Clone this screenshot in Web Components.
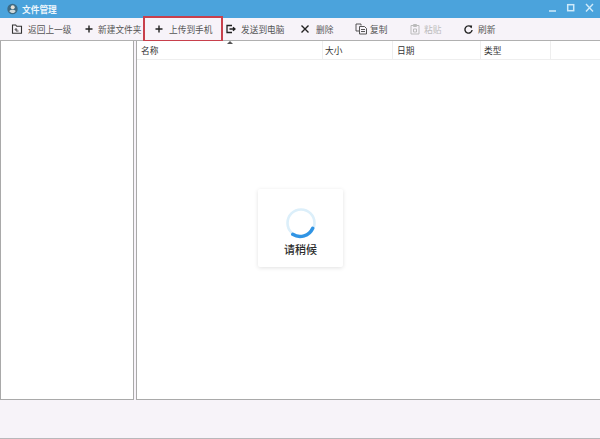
<!DOCTYPE html>
<html><head><meta charset="utf-8">
<style>
html,body{margin:0;padding:0;height:100%;background:#f7f3f9}
body{font-family:"Liberation Sans","Noto Sans CJK SC",sans-serif}
</style></head><body>
<fm-window>
  <tool-btn style="width:75px" label="返回上一级" ml="11" mr="5"><svg viewBox="0 0 12 12" width="12" height="12"><path d="M1.500 2h3.200l1 1.300h4.800v7h-9z" fill="none" stroke="#333" stroke-width="1.100"/><path d="M7.500 8H5V5.800M3.900 6.800L5 5.500l1.100 1.300" fill="none" stroke="#333" stroke-width=".9"/></svg></tool-btn>
  <tool-btn style="width:68px" label="新建文件夹" ml="9" mr="4"><svg viewBox="0 0 10 10" width="10" height="10"><path d="M5 1.500v7M1.500 5h7" stroke="#222" stroke-width="1.400"/></svg></tool-btn>
  <tool-btn style="width:80px" label="上传到手机" ml="11" mr="5" sel><svg viewBox="0 0 10 10" width="10" height="10"><path d="M5 1.500v7M1.500 5h7" stroke="#222" stroke-width="1.400"/></svg></tool-btn>
  <tool-btn style="width:76px" label="发送到电脑" ml="2" mr="4"><svg viewBox="0 0 12 12" width="12" height="12"><path d="M7 2.500H2v7h5" fill="none" stroke="#222" stroke-width="1.300"/><path d="M4.500 6h5M8 4.200L10 6 8 7.800" fill="none" stroke="#222" stroke-width="1.300"/></svg></tool-btn>
  <tool-btn style="width:54px" label="删除" ml="1" mr="6"><svg viewBox="0 0 10 10" width="10" height="10"><path d="M1.500 1.500l7 7M8.500 1.500l-7 7" stroke="#222" stroke-width="1.400"/></svg></tool-btn>
  <tool-btn style="width:54px" label="复制" ml="2" mr="1"><svg viewBox="0 0 14 12" width="14" height="12"><path d="M1 1h5v1.500M1 1v7h3M4.500 3.500h5l2 2v5.500h-7z M6 6.500h4M6 8.500h4" fill="none" stroke="#444" stroke-width="0.900"/></svg></tool-btn>
  <tool-btn style="width:54px" label="粘贴" ml="2" mr="3" dis><svg viewBox="0 0 12 12" width="12" height="12"><path d="M2 2.500h8V11H2zM4.500 1.500h3v2h-3zM4.500 6h3v3h-3z" fill="none" stroke="#bbb" stroke-width="1"/></svg></tool-btn>
  <tool-btn style="width:50px" label="刷新" ml="2" mr="4"><svg viewBox="0 0 11 11" width="11" height="11"><path d="M8.300 3.200A3.600 3.600 0 1 0 9.100 6" fill="none" stroke="#222" stroke-width="1.400"/><path d="M6.200 1.500l2.900.1-.3 2.900z" fill="#222"/></svg></tool-btn>
</fm-window>
<script>
function def(name,html){customElements.define(name,class extends HTMLElement{connectedCallback(){if(this.shadowRoot)return;const r=this.attachShadow({mode:'open'});r.innerHTML=typeof html==='function'?html(this):html;}});}
def('tool-btn',el=>`<style>
:host{display:flex;align-items:center;box-sizing:border-box;height:22px;flex:none;white-space:nowrap;position:relative}
.i{display:flex;align-items:center;justify-content:center;margin-left:${el.getAttribute('ml')}px;margin-right:${el.getAttribute('mr')}px}
.l{font-size:8.700px;color:${el.hasAttribute('dis')?'#bcbcbc':'#555'}}
.sel{position:absolute;left:0;right:0;top:-2px;bottom:-2px;border:2px solid #c8404c;box-sizing:border-box;pointer-events:none}
</style><span class="i"><slot></slot></span><span class="l">${el.getAttribute('label')}</span>${el.hasAttribute('sel')?'<span class="sel"></span>':''}`);
def('title-bar',`<style>
:host{display:flex;align-items:center;height:18px;background:#4ba3dc;color:#fff;font-size:8.700px;font-weight:700;flex:none}
.logo{margin:0 4px 0 7px;flex:none}
.t{flex:1;opacity:.9}
.c{display:flex;align-items:center;margin-right:2px}
.c svg{display:block;width:18px;height:16px}
</style>
<svg class="logo" width="11" height="12" viewBox="0 0 11 12"><circle cx="5.500" cy="6" r="5.200" fill="#3d6a83"/><circle cx="5.700" cy="4.200" r="2" fill="#e7e1d6"/><path d="M2.300 8.200c1-1.800 5-2 6.400-.2-1 2.500-4.500 2.800-6.400.2z" fill="#cfd8d9"/></svg>
<span class="t">文件管理</span>
<span class="c">
<svg viewBox="0 0 18 16"><path d="M5 10h7" stroke="#cfeafa" stroke-width="1.500"/></svg>
<svg viewBox="0 0 18 16"><rect x="5.700" y="3.700" width="6" height="6" fill="none" stroke="#cfeafa" stroke-width="1.500"/></svg>
<svg viewBox="0 0 18 16"><path d="M6 3l7 7.500M13 3l-7 7.500" stroke="#cfeafa" stroke-width="1.400"/></svg>
</span>`);
def('col-head',`<style>
:host{display:flex;align-items:center;box-sizing:border-box;height:100%;font-size:8.700px;color:#333;border-right:1px solid #eeeeee;flex:none;white-space:nowrap;padding-top:1px}
</style><slot></slot>`);
def('wait-card',`<style>
:host{display:flex;flex-direction:column;align-items:center;box-sizing:border-box;width:85px;height:78px;background:#fff;border-radius:2px;box-shadow:0 1px 4px rgba(0,0,0,.12);padding-top:18px;font-size:11px;font-weight:500;color:#2c2c2c}
svg{display:block;margin-bottom:2px}
</style>
<svg width="32" height="32" viewBox="0 0 32 32"><circle cx="16" cy="16" r="13.500" fill="none" stroke="#dceffa" stroke-width="2.600"/><path d="M7.700 27.300A13.800 13.800 0 0 0 27.700 21.300" fill="none" stroke="#3094e4" stroke-width="3.400" stroke-linecap="round"/></svg>
<span>请稍候</span>`);
def('fm-window',`<style>
:host{display:block;width:600px;height:439px;background:#f7f3f9;overflow:hidden;position:relative}
.page{display:flex;flex-direction:column;height:438px;border-bottom:1px solid #b9b7bb}
.tb{display:flex;height:22px;flex:none;background:#f7f3f9}
.main{display:flex;gap:2px;height:360px;flex:none;border-top:1px solid #b0b0b0;box-sizing:border-box}
.left,.right{background:#fff;border:1px solid #a9a9a9;border-top:0;box-sizing:border-box;height:100%}
.left{width:134px;flex:none}
.right{flex:1;border-right:0;display:flex;flex-direction:column;position:relative}
.head{display:flex;height:19px;flex:none;border-bottom:1px solid #eee;box-sizing:border-box;position:relative}
.caret{position:absolute;left:90px;top:0;width:0;height:0;border:3px solid transparent;border-top:0;border-bottom:3px solid #555}
.card{position:absolute;left:258px;top:189px}
</style>
<div class="page">
<title-bar></title-bar>
<div class="tb"><slot></slot></div>
<div class="main">
<div class="left"></div>
<div class="right">
<div class="head"><span class="caret"></span>
<col-head style="width:186px;padding-left:4px">名称</col-head>
<col-head style="width:70px;padding-left:2px">大小</col-head>
<col-head style="width:88px;padding-left:4px">日期</col-head>
<col-head style="width:70px;padding-left:3px">类型</col-head>
</div>
</div></div></div>
<wait-card class="card"></wait-card>`);
</script>
</body></html>
